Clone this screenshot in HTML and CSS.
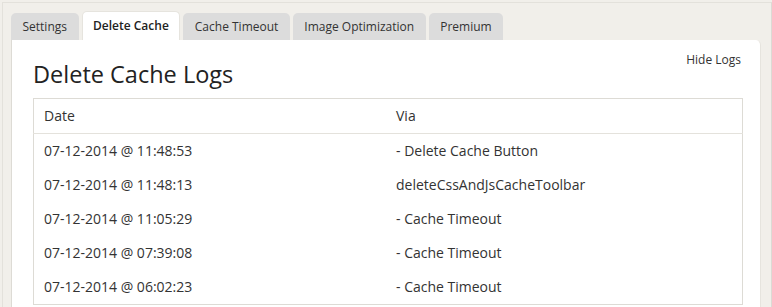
FILE: index.html
```html
<!DOCTYPE html>
<html lang="en">
<head>
  <meta charset="UTF-8">
  <title>Delete Cache Logs</title>
  <link rel="stylesheet" href="styles.css">
</head>
<body>

  <div class="wrap">
    <div class="tabs">
      <a class="tab">Settings</a>
      <a class="tab active">Delete Cache</a>
      <a class="tab">Cache Timeout</a>
      <a class="tab">Image Optimization</a>
      <a class="tab">Premium</a>
    </div>

    <div class="panel">
      <div class="panel-head">
        <h2>Delete Cache Logs</h2>
        <a class="hide-logs">Hide Logs</a>
      </div>

      <table class="logs">
        <thead>
          <tr>
            <th>Date</th>
            <th>Via</th>
          </tr>
        </thead>
        <tbody>
          <tr><td>07-12-2014 @ 11:48:53</td><td>- Delete Cache Button</td></tr>
          <tr><td>07-12-2014 @ 11:48:13</td><td>deleteCssAndJsCacheToolbar</td></tr>
          <tr><td>07-12-2014 @ 11:05:29</td><td>- Cache Timeout</td></tr>
          <tr><td>07-12-2014 @ 07:39:08</td><td>- Cache Timeout</td></tr>
          <tr><td>07-12-2014 @ 06:02:23</td><td>- Cache Timeout</td></tr>
        </tbody>
      </table>
    </div>
  </div>

</body>
</html>
```

FILE: styles.css
```css
body {
  margin: 0;
  font-family: 'Open Sans', sans-serif;
  background: #f1efea;
  color: #333;
  overflow: hidden;
}

.wrap {
  margin: 2px 0 0 2px;
  border-top: 1px solid #e3e1db;
  border-left: 1px solid #e3e1db;
  border-right: 1px solid #dcdad4;
  background: #f1efea;
  padding: 8px 10px 0 8px;
  height: 400px;
}

.tabs {
  display: flex;
  gap: 3px;
  align-items: flex-end;
}

.tab {
  display: block;
  height: 27px;
  line-height: 27px;
  padding: 0 11.5px;
  font-size: 12px;
  color: #333;
  background: #dcdcdc;
  border-radius: 5px 5px 0 0;
}

.tab.active {
  background: #fff;
  color: #222;
  font-weight: 600;
  height: 28px;
  border: 1px solid #e6e4de;
  border-bottom: none;
  padding: 0 10.5px;
}

.panel {
  background: #fff;
  border-left: 1px solid #dddbd5;
  border-right: 1px solid #e6e4de;
  border-radius: 0 5px 0 0;
  padding: 0 17px 0 21px;
  height: 300px;
}

.panel-head {
  display: flex;
  justify-content: space-between;
  align-items: flex-start;
}

h2 {
  margin: 0;
  padding-top: 18px;
  font-size: 23.5px;
  font-weight: 400;
  line-height: 32px;
  color: #222;
}

.hide-logs {
  font-size: 12px;
  color: #333;
  margin-top: 11px;
  margin-right: 2px;
}

.logs {
  margin-top: 8px;
  width: 100%;
  border-collapse: collapse;
  border: 1px solid #dddbd5;
  font-size: 14px;
}

.logs th,
.logs td {
  text-align: left;
  font-weight: 400;
  padding: 8px 10px;
  line-height: 18px;
}

.logs th:first-child,
.logs td:first-child {
  width: 332px;
}

.logs thead th {
  border-bottom: 1px solid #e4e2dc;
}
```
